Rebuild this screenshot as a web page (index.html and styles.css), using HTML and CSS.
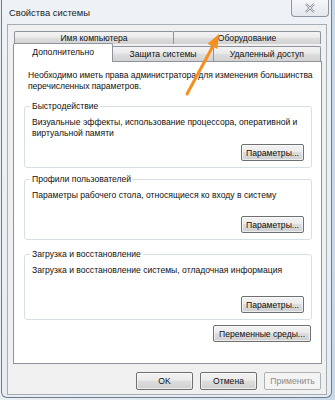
FILE: index.html
```html
<!DOCTYPE html>
<html lang="ru">
<head>
    <meta charset="UTF-8">
    <meta name="viewport" content="width=device-width, initial-scale=1.0">
    <title>Свойства системы</title>
    <link rel="stylesheet" href="styles.css">
</head>
<body>
    <div class="window">
        <div class="titlebar">
            <span class="title">Свойства системы</span>
            <div class="close-btn">
                <svg width="12" height="10" viewBox="0 0 12 10">
                    <path d="M2 1 L10 9 M10 1 L2 9" stroke="#8d939b" stroke-width="2.2" fill="none"/>
                    <path d="M2 1 L10 9 M10 1 L2 9" stroke="#f4f6f8" stroke-width="0.8" fill="none"/>
                </svg>
            </div>
        </div>

        <div class="client">
            <div class="tabs">
                <div class="tab-row back">
                    <div class="tab tab-name">Имя компьютера</div>
                    <div class="tab tab-hw">Оборудование</div>
                </div>
                <div class="tab-row front">
                    <div class="tab tab-adv active">Дополнительно</div>
                    <div class="tab tab-prot">Защита системы</div>
                    <div class="tab tab-remote">Удаленный доступ</div>
                </div>
            </div>

            <div class="panel">
                <p class="note">Необходимо иметь права администратора для изменения большинства перечисленных параметров.</p>

                <div class="group group-perf">
                    <span class="legend">Быстродействие</span>
                    <p>Визуальные эффекты, использование процессора, оперативной и виртуальной памяти</p>
                    <div class="group-foot"><button class="btn">Параметры...</button></div>
                </div>

                <div class="group group-prof">
                    <span class="legend">Профили пользователей</span>
                    <p>Параметры рабочего стола, относящиеся ко входу в систему</p>
                    <div class="group-foot"><button class="btn">Параметры...</button></div>
                </div>

                <div class="group group-boot">
                    <span class="legend">Загрузка и восстановление</span>
                    <p>Загрузка и восстановление системы, отладочная информация</p>
                    <div class="group-foot"><button class="btn">Параметры...</button></div>
                </div>

                <div class="env-row"><button class="btn btn-env">Переменные среды...</button></div>
            </div>

            <div class="actions">
                <button class="btn btn-dlg">OK</button>
                <button class="btn btn-dlg">Отмена</button>
                <button class="btn btn-dlg" disabled>Применить</button>
            </div>
        </div>
    </div>

    <!-- стрелка-указатель поверх окна -->
    <svg class="arrow" width="335" height="400" viewBox="0 0 335 400">
        <line x1="187" y1="94" x2="213" y2="46" stroke="#f5901e" stroke-width="3" stroke-linecap="round"/>
        <polygon points="219,34 217.3,48.9 207.6,43.7" fill="#f5901e"/>
    </svg>
</body>
</html>
```

FILE: styles.css
```css
body {
    margin: 0;
    width: 335px;
    height: 400px;
    overflow: hidden;
    background: linear-gradient(90deg, #e9eef3 0%, #dfe8f1 60%, #c9d9ea 100%);
    font-family: "Liberation Sans", Arial, sans-serif;
    font-size: 8.6px;
    color: #111;
    position: relative;
}
.window {
    margin-left: 1px;
    width: 331px;
    height: 398px;
    box-sizing: border-box;
    background: linear-gradient(180deg, #eef2f6 0%, #e6ecf2 100%);
    border: 1px solid #6f7b88;
    border-top: none;
    border-radius: 0 0 6px 6px;
    padding: 0 4px 2px 5px;
    display: flex;
    flex-direction: column;
}
.titlebar {
    height: 24px;
    display: flex;
    align-items: flex-start;
    justify-content: space-between;
}
.title {
    font-size: 9.4px;
    color: #1b1b1b;
    margin-top: 7px;
    margin-left: 2px;
}
.close-btn {
    width: 38px;
    height: 17px;
    margin-right: -2px;
    box-sizing: border-box;
    border: 1px solid #8c96a2;
    border-top: none;
    border-radius: 0 0 4px 4px;
    background: linear-gradient(180deg, #f5f7f9 0%, #e3e8ee 100%);
    display: flex;
    align-items: center;
    justify-content: center;
}
.client {
    flex: 1;
    background: #f0f0f0;
    border: 1px solid #a5adb7;
    display: flex;
    flex-direction: column;
    padding: 6px 5px 0 5px;
}
.tabs {
    display: flex;
    flex-direction: column;
    position: relative;
    z-index: 1;
}
.tab-row {
    display: flex;
}
.tab-row.back {
    padding-left: 2px;
    height: 12px;
}
.tab-row.front {
    height: 18px;
    align-items: flex-end;
}
.tab {
    box-sizing: border-box;
    border: 1px solid #8e939c;
    border-bottom: none;
    border-radius: 2px 2px 0 0;
    background: linear-gradient(180deg, #f3f3f3 0%, #ebebeb 45%, #dedede 50%, #d2d2d2 100%);
    text-align: center;
    color: #111;
}
.back .tab {
    height: 13px;
    line-height: 12px;
    margin-left: -1px;
}
.tab-name { width: 160px; }
.tab-hw { width: 148px; }
.front .tab {
    height: 15px;
    line-height: 14px;
    margin-left: -1px;
}
.tab-adv { width: 101px; }
.tab-prot { width: 102px; }
.tab-remote { width: 109px; }
.front .tab.active {
    height: 19px;
    line-height: 17px;
    background: #ffffff;
    margin-left: 0;
    margin-bottom: -1px;
    padding-bottom: 2px;
}
.panel {
    width: 309px;
    height: 303px;
    box-sizing: border-box;
    background: #ffffff;
    border: 1px solid #8e939c;
    padding: 8px 9px 0 10px;
}
.note {
    margin: 0 -8px 14px 4px;
    line-height: 11px;
    letter-spacing: -0.05px;
}
.group {
    box-sizing: border-box;
    border: 1px solid #d5dfe5;
    border-radius: 3px;
    padding: 0 7px 6px 7px;
    display: flex;
    flex-direction: column;
    align-items: flex-start;
}
.group-perf { height: 62px; margin-bottom: 11px; }
.group-prof { height: 61px; margin-bottom: 14px; }
.group-boot { height: 66px; margin-bottom: 5px; }
.legend {
    line-height: 11px;
    margin-top: -6px;
    margin-left: -2px;
    padding: 0 2px;
    background: #ffffff;
}
.group p {
    margin: 5px 0 0 0;
    line-height: 11px;
}
.group-foot {
    margin-top: auto;
    align-self: stretch;
    display: flex;
    justify-content: flex-end;
}
.btn {
    font-family: "Liberation Sans", Arial, sans-serif;
    font-size: 8.6px;
    color: #111;
    height: 17px;
    padding: 0;
    box-sizing: border-box;
    border: 1px solid #707070;
    border-radius: 2px;
    background: linear-gradient(180deg, #f2f2f2 0%, #ebebeb 45%, #dddddd 50%, #cfcfcf 100%);
    box-shadow: inset 0 0 0 1px rgba(255, 255, 255, 0.6);
}
.group .btn {
    width: 63px;
}
.env-row {
    display: flex;
    justify-content: flex-end;
    padding-right: 1px;
}
.btn-env {
    width: 98px;
}
.actions {
    display: flex;
    justify-content: flex-end;
    gap: 7px;
    padding-top: 8px;
}
.btn-dlg {
    width: 57px;
    height: 18px;
}
.btn-dlg[disabled] {
    color: #8a8a8a;
    border-color: #adb2b5;
    background: #f4f4f4;
    box-shadow: none;
}
.arrow {
    position: absolute;
    left: 0;
    top: 0;
    z-index: 2;
    pointer-events: none;
}
```
